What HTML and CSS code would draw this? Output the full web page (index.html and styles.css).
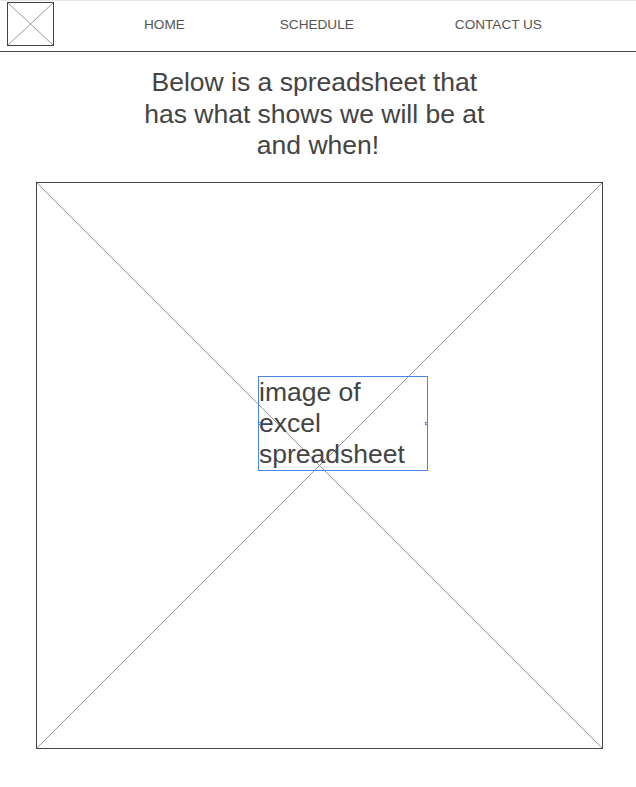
FILE: index.html
```html
<!DOCTYPE html>
<html lang="en">
<head>
<meta charset="utf-8">
<title>Schedule</title>
<link rel="stylesheet" href="styles.css">
</head>
<body>
<header class="topbar">
  <div class="logo">
    <svg class="xfill" viewBox="0 0 100 100" preserveAspectRatio="none"><line x1="0" y1="0" x2="100" y2="100" vector-effect="non-scaling-stroke"/><line x1="100" y1="0" x2="0" y2="100" vector-effect="non-scaling-stroke"/></svg>
  </div>
  <nav class="nav">
    <a class="nav-item" href="#">HOME</a>
    <a class="nav-item" href="#">SCHEDULE</a>
    <a class="nav-item nav-last" href="#">CONTACT US</a>
  </nav>
</header>
<main class="content">
  <h1 class="intro">Below is a spreadsheet that has what shows we will be at and when!</h1>
  <div class="sheet">
    <svg class="xfill" viewBox="0 0 100 100" preserveAspectRatio="none"><line x1="0" y1="0" x2="100" y2="100" vector-effect="non-scaling-stroke"/><line x1="100" y1="0" x2="0" y2="100" vector-effect="non-scaling-stroke"/></svg>
    <div class="caption">image of excel spreadsheet<span class="handle handle-l"></span><span class="handle handle-r"></span></div>
  </div>
</main>
</body>
</html>
```
FILE: styles.css
```css
html, body {
  margin: 0;
  padding: 0;
  background: #fff;
}
body {
  font-family: "Liberation Sans", Arial, sans-serif;
  color: #444;
  border-top: 1px solid #e6e6e6;
}
.topbar {
  display: flex;
  align-items: center;
  height: 50px;
  border-bottom: 1px solid #444;
}
.logo {
  position: relative;
  width: 45px;
  height: 42px;
  margin-left: 7px;
  margin-top: -5px;
  border: 1px solid #444;
}
.xfill {
  position: absolute;
  left: 0;
  top: 0;
  width: 100%;
  height: 100%;
}
.xfill line {
  stroke: #999;
  stroke-width: 1;
}
.nav {
  display: flex;
  gap: 95px;
  margin-left: 90px;
  margin-top: -4px;
}
.nav-item {
  font-size: 13.6px;
  color: #555;
  text-decoration: none;
}
.nav-last {
  margin-left: 6px;
}
.content {
  padding-top: 15px;
}
.intro {
  width: 350px;
  margin: 0 auto 0 143px;
  font-size: 26.5px;
  line-height: 31.5px;
  font-weight: normal;
  text-align: center;
  white-space: break-spaces;
  color: #444;
}
.sheet {
  position: relative;
  width: 565px;
  height: 565px;
  margin: 20px 0 0 36px;
  border: 1px solid #444;
}
.caption {
  position: absolute;
  left: 221px;
  top: 193px;
  width: 168px;
  height: 93px;
  border: 1px solid #4a86e8;
  font-size: 26.5px;
  line-height: 31px;
  color: #444;
}
.handle {
  position: absolute;
  top: 45px;
  width: 3px;
  height: 3px;
  border: 1px solid #4a86e8;
  background: #fff;
  box-sizing: border-box;
}
.handle-l { left: -1px; }
.handle-r { right: -1px; }
```
